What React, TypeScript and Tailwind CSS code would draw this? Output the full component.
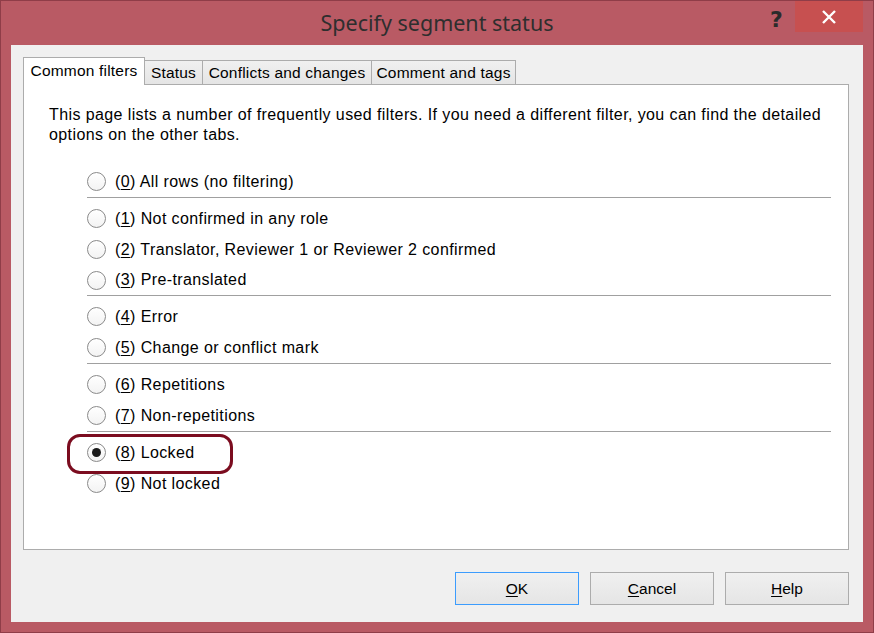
import React from "react";

const rows: { n: number; label: string; sepAfter?: boolean; checked?: boolean }[] = [
  { n: 0, label: "All rows (no filtering)", sepAfter: true },
  { n: 1, label: "Not confirmed in any role" },
  { n: 2, label: "Translator, Reviewer 1 or Reviewer 2 confirmed" },
  { n: 3, label: "Pre-translated", sepAfter: true },
  { n: 4, label: "Error" },
  { n: 5, label: "Change or conflict mark", sepAfter: true },
  { n: 6, label: "Repetitions" },
  { n: 7, label: "Non-repetitions", sepAfter: true },
  { n: 8, label: "Locked", checked: true },
  { n: 9, label: "Not locked" },
];

function Radio({ checked }: { checked?: boolean }) {
  return (
    <span className="flex h-[19px] w-[19px] shrink-0 items-center justify-center rounded-full border border-[#8a8a8a] bg-gradient-to-b from-white to-[#f3f3f3]">
      {checked && <span className="h-[9px] w-[9px] rounded-full bg-[#1a1a1a]" />}
    </span>
  );
}

function Btn({ label, ul, focused }: { label: string; ul: string; focused?: boolean }) {
  return (
    <button
      className={
        "flex h-[33px] w-[124px] items-center justify-center border bg-gradient-to-b from-[#f0f0f0] to-[#e5e5e5] text-[15.5px] text-black " +
        (focused ? "border-[#3c9cfd]" : "border-[#acacac]")
      }
    >
      <span className="underline underline-offset-2">{ul}</span>
      {label}
    </button>
  );
}

export default function App() {
  return (
    <div className="h-[633px] w-[874px] border border-[#8f3d48] bg-[#b95a64] font-['Liberation_Sans',Arial,sans-serif] text-black">
      {/* Title bar */}
      <div className="relative flex h-[44px] items-center justify-center">
        <span className="font-['Noto_Sans',sans-serif] text-[21.5px] text-[#2e2e2e]">
          Specify segment status
        </span>
        <span className="absolute left-[769px] top-[2px] font-['DejaVu_Sans',sans-serif] text-[22px] font-bold text-[#2b2b2b]">
          ?
        </span>
        <div className="absolute left-[794px] top-0 flex h-[31px] w-[68px] items-center justify-center bg-[#c75050]">
          <svg width="14" height="14" viewBox="0 0 14 14">
            <path d="M1 1 L13 13 M13 1 L1 13" stroke="white" strokeWidth="2.4" />
          </svg>
        </div>
      </div>

      {/* Client area */}
      <div className="ml-[10px] flex h-[577px] w-[852px] flex-col bg-[#f0f0f0] pl-[12px] pt-[12px]">
        {/* Tabs */}
        <div className="flex h-[27px] items-end text-[15.5px] tracking-[0.2px]">
          <div className="relative z-10 -mb-px flex h-[28px] w-[122px] items-center justify-center border-x border-t border-[#acacac] bg-white pb-[2px]">
            Common filters
          </div>
          <div className="flex h-[24px] w-[58px] items-center justify-center border-r border-t border-[#acacac] bg-gradient-to-b from-[#f0f0f0] to-[#e5e5e5]">
            Status
          </div>
          <div className="flex h-[24px] w-[169px] items-center justify-center border-r border-t border-[#acacac] bg-gradient-to-b from-[#f0f0f0] to-[#e5e5e5]">
            Conflicts and changes
          </div>
          <div className="flex h-[24px] w-[144px] items-center justify-center border-r border-t border-[#acacac] bg-gradient-to-b from-[#f0f0f0] to-[#e5e5e5]">
            Comment and tags
          </div>
        </div>

        {/* Panel */}
        <div className="h-[466px] w-[826px] border border-[#acacac] bg-white pl-[25px] pr-[10px] pt-[20px] text-[16px] tracking-[0.4px]">
          <p className="leading-[20px]">
            This page lists a number of frequently used filters. If you need a different filter, you can find the detailed
            <br />
            options on the other tabs.
          </p>

          <div className="ml-[38px] mr-[7px] mt-[21px]">
            {rows.map((r) => (
              <div key={r.n}>
                <div className={"relative flex items-center gap-[9px] " + (r.n === 3 ? "h-[30px]" : "h-[31px]")}>
                  <Radio checked={r.checked} />
                  <span>
                    (<span className="underline underline-offset-2">{r.n}</span>) {r.label}
                  </span>
                  {r.checked && (
                    <span className="absolute left-[-20px] top-[-3px] h-[40px] w-[166px] rounded-[13px] border-[3px] border-[#7b0c1f]" />
                  )}
                </div>
                {r.sepAfter && <div className="mb-[5px] h-px bg-[#a0a0a0]" />}
              </div>
            ))}
          </div>
        </div>

        {/* Buttons */}
        <div className="mt-[22px] flex justify-end gap-[11px] pr-[14px]">
          <Btn ul="O" label="K" focused />
          <Btn ul="C" label="ancel" />
          <Btn ul="H" label="elp" />
        </div>
      </div>
    </div>
  );
}
